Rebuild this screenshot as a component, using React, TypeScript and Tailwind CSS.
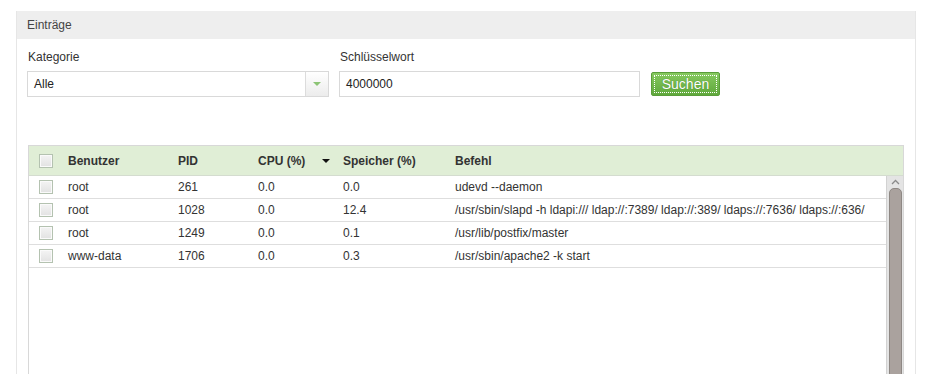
import React from "react";

const rows = [
  { user: "root", pid: "261", cpu: "0.0", mem: "0.0", cmd: "udevd --daemon" },
  { user: "root", pid: "1028", cpu: "0.0", mem: "12.4", cmd: "/usr/sbin/slapd -h ldapi:/// ldap://:7389/ ldap://:389/ ldaps://:7636/ ldaps://:636/" },
  { user: "root", pid: "1249", cpu: "0.0", mem: "0.1", cmd: "/usr/lib/postfix/master" },
  { user: "www-data", pid: "1706", cpu: "0.0", mem: "0.3", cmd: "/usr/sbin/apache2 -k start" },
];

function Box() {
  return (
    <div className="w-[14px] h-[14px] border border-[#b4c2b0] bg-gradient-to-b from-[#f4f4f4] to-[#e2e2e2] shadow-[inset_0_0_0_1px_#fafafa]" />
  );
}

export default function App() {
  return (
    <div
      className="w-[932px] h-[374px] overflow-hidden bg-white pt-[11px] px-[16px] text-[12px] text-[#333]"
      style={{ fontFamily: '"Liberation Sans", Arial, sans-serif' }}
    >
      <div className="border-x border-[#e6e6e6] h-[400px]">
        <div className="h-[28px] bg-[#eeeeee] flex items-center pl-[10px] text-[12px] text-[#444]">Einträge</div>
        <div className="px-[10px]">
          <div className="flex items-start mt-[8px]">
            <div className="w-[302px]">
              <div className="h-[20px] leading-[20px] pl-[1px] mb-[4px]">Kategorie</div>
              <div className="h-[26px] border border-[#d9d9d9] flex bg-white">
                <div className="flex-1 flex items-center pl-[6px] text-[#222]">Alle</div>
                <div className="w-[23px] border-l border-[#dcdcdc] bg-gradient-to-b from-[#ffffff] to-[#ececec] flex items-center justify-center">
                  <div className="w-0 h-0 border-l-[4px] border-r-[4px] border-t-[4px] border-l-transparent border-r-transparent border-t-[#8cc475]" />
                </div>
              </div>
            </div>
            <div className="w-[301px] ml-[10px]">
              <div className="h-[20px] leading-[20px] pl-[1px] mb-[4px]">Schlüsselwort</div>
              <div className="h-[26px] border border-[#d9d9d9] flex items-center pl-[6px] text-[#222] bg-white">4000000</div>
            </div>
            <div className="ml-[11px] mt-[25px] w-[69px] h-[24px] p-[2px] rounded-[2px] bg-gradient-to-b from-[#86c95f] to-[#5fa83b] border border-[#5a9d3a]">
              <div className="w-full h-full border border-dotted border-white flex items-center justify-center text-white text-[14px] [text-shadow:0_0_1px_#3d7a20]">
                Suchen
              </div>
            </div>
          </div>

          <div className="mt-[48px] mx-[1px] border border-[#d8d8d8] h-[260px] flex flex-col">
            <div className="h-[30px] bg-[#e0eed6] flex items-center font-bold text-[#333] border-b border-[#d4dccf]">
              <div className="w-[39px] pl-[10px] flex items-center"><Box /></div>
              <div className="w-[110px]">Benutzer</div>
              <div className="w-[80px]">PID</div>
              <div className="w-[85px] flex items-center">
                <span>CPU (%)</span>
                <span className="ml-[17px] w-0 h-0 border-l-[4px] border-r-[4px] border-t-[4px] border-l-transparent border-r-transparent border-t-[#111]" />
              </div>
              <div className="w-[112px]">Speicher (%)</div>
              <div className="flex-1">Befehl</div>
            </div>
            <div className="flex flex-1">
              <div className="flex-1 bg-white">
                {rows.map((r, i) => (
                  <div key={i} className="h-[23px] flex items-center border-b border-[#dedede]">
                    <div className="w-[39px] pl-[10px] flex items-center"><Box /></div>
                    <div className="w-[110px]">{r.user}</div>
                    <div className="w-[80px]">{r.pid}</div>
                    <div className="w-[85px]">{r.cpu}</div>
                    <div className="w-[112px]">{r.mem}</div>
                    <div className="flex-1 whitespace-nowrap">{r.cmd}</div>
                  </div>
                ))}
              </div>
              <div className="w-[17px] bg-[#e4e4e4] border-l border-[#d2d2d2] flex flex-col items-center">
                <div className="h-[12px] flex items-center justify-center text-[#777]">
                  <svg width="9" height="6" viewBox="0 0 9 6"><path d="M1 5 L4.5 1.5 L8 5" fill="none" stroke="#8a8a8a" strokeWidth="1.3" /></svg>
                </div>
                <div className="w-[13px] flex-1 rounded-t-[5px] bg-[#aaa29e] border border-[#8e8884]" />
              </div>
            </div>
          </div>
        </div>
      </div>
    </div>
  );
}
